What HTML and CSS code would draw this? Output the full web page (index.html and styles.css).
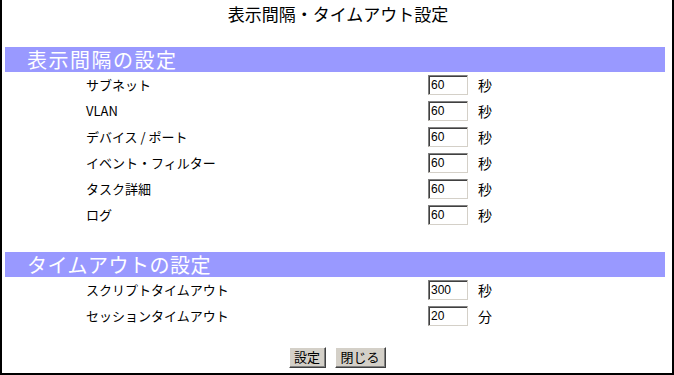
FILE: index.html
```html
<!DOCTYPE html>
<html lang="ja">
<head>
<meta charset="utf-8">
<title>表示間隔・タイムアウト設定</title>
<link rel="stylesheet" href="styles.css">
</head>
<body>
<div class="frame">
  <h1 class="title">表示間隔・タイムアウト設定</h1>

  <h2 class="bar">表示間隔の設定</h2>
  <div class="rows">
    <div class="row"><span class="label">サブネット</span><span class="field">60</span><span class="unit">秒</span></div>
    <div class="row"><span class="label">VLAN</span><span class="field">60</span><span class="unit">秒</span></div>
    <div class="row"><span class="label">デバイス / ポート</span><span class="field">60</span><span class="unit">秒</span></div>
    <div class="row"><span class="label">イベント・フィルター</span><span class="field">60</span><span class="unit">秒</span></div>
    <div class="row"><span class="label">タスク詳細</span><span class="field">60</span><span class="unit">秒</span></div>
    <div class="row"><span class="label">ログ</span><span class="field">60</span><span class="unit">秒</span></div>
  </div>

  <h2 class="bar bar-second">タイムアウトの設定</h2>
  <div class="rows">
    <div class="row"><span class="label">スクリプトタイムアウト</span><span class="field">300</span><span class="unit">秒</span></div>
    <div class="row"><span class="label">セッションタイムアウト</span><span class="field">20</span><span class="unit">分</span></div>
  </div>

  <div class="buttons">
    <span class="btn btn-set">設定</span>
    <span class="btn btn-close">閉じる</span>
  </div>
</div>
</body>
</html>
```

FILE: styles.css
```css
html, body {
  margin: 0;
  padding: 0;
  background: #ffffff;
}

body {
  font-family: "Noto Sans CJK JP", "Noto Sans", "Liberation Sans", sans-serif;
  color: #000000;
}

.frame {
  box-sizing: border-box;
  width: 674px;
  height: 375px;
  border: 2px solid #000000;
  border-top: none;
  overflow: hidden;
}

.title {
  margin: 0;
  padding-top: 3px;
  height: 47px;
  box-sizing: border-box;
  font-size: 17px;
  line-height: 22px;
  font-weight: normal;
  text-align: center;
  padding-left: 2px;
}

.bar {
  margin: 0 7px 0 3px;
  height: 25px;
  background: #9999ff;
  color: #ffffff;
  font-size: 20px;
  line-height: 25px;
  font-weight: normal;
  padding-left: 22px;
  letter-spacing: 1.5px;
}

.bar-second {
  margin-top: 24px;
  letter-spacing: 0.5px;
}

.rows {
  display: flex;
  flex-direction: column;
}

.row {
  display: grid;
  grid-template-columns: 332px 40px 50px;
  column-gap: 10px;
  align-items: center;
  height: 26px;
  padding-left: 84px;
  font-size: 13px;
}

.label {
  line-height: 18px;
}

.field {
  box-sizing: border-box;
  width: 40px;
  height: 20px;
  border-top: 1px solid #808080;
  border-left: 1px solid #808080;
  border-right: 1px solid #d4d0c8;
  border-bottom: 1px solid #d4d0c8;
  box-shadow: inset 1px 1px 0 #404040;
  padding-left: 2px;
  padding-top: 1px;
  font-family: "Liberation Sans", "Noto Sans", sans-serif;
  font-size: 12px;
  line-height: 16px;
  background: #ffffff;
}

.unit {
  font-size: 14px;
  line-height: 18px;
}

.buttons {
  display: flex;
  justify-content: center;
  gap: 9px;
  margin-top: 18px;
}

.btn {
  box-sizing: border-box;
  height: 21px;
  background: #d4d0c8;
  border-top: 1px solid #ffffff;
  border-left: 1px solid #ffffff;
  border-right: 1px solid #404040;
  border-bottom: 1px solid #404040;
  box-shadow: inset -1px -1px 0 #808080;
  font-size: 13px;
  line-height: 18px;
  text-align: center;
}

.btn-set {
  width: 37px;
}

.btn-close {
  width: 51px;
}
```
